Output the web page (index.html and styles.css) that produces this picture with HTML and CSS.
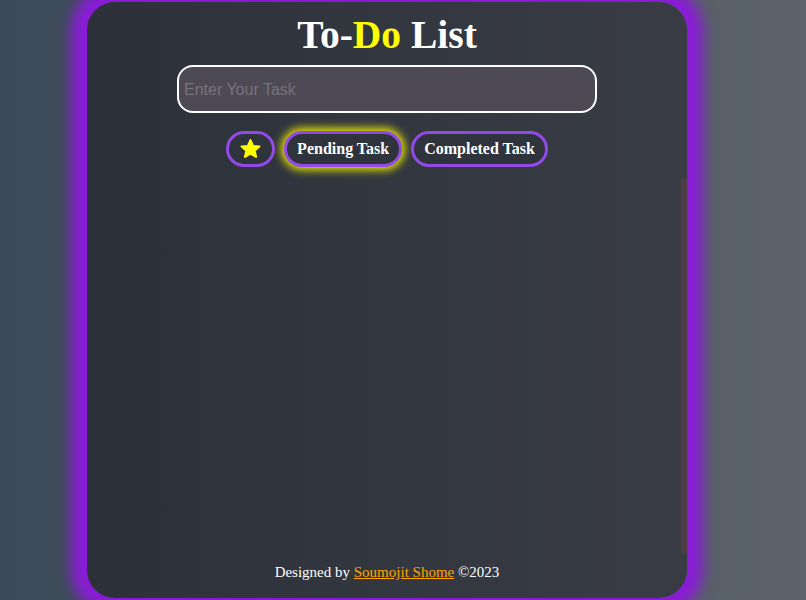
FILE: index.html
```html
<!DOCTYPE html>
<html lang="en">
<head>
<meta charset="UTF-8">
<title>To-Do List</title>
<link rel="stylesheet" href="styles.css">
</head>
<body>
<div class="card">
  <h1 class="title">To-<span class="accent">Do</span> List</h1>
  <input class="task-input" type="text" placeholder="Enter Your Task">
  <div class="filters">
    <button class="filter-btn star-btn" aria-label="Starred">
      <svg width="23" height="22" viewBox="0 0 24 23"><path d="M12 2.2l2.7 6.1 6.6.6-5 4.4 1.5 6.5L12 16.4l-5.8 3.4 1.5-6.5-5-4.4 6.6-.6z" fill="#ffff00" stroke="#ffff00" stroke-width="2.2" stroke-linejoin="round"/></svg>
    </button>
    <button class="filter-btn active">Pending Task</button>
    <button class="filter-btn">Completed Task</button>
  </div>
  <div class="task-list"></div>
  <footer class="footer">Designed by <a href="#" class="author">Soumojit Shome</a> ©2023</footer>
</div>
</body>
</html>
```
FILE: styles.css
```css
* { box-sizing: border-box; }
html, body { height: 100%; }
body {
  margin: 0;
  height: 600px;
  overflow: hidden;
  background: linear-gradient(to right, #3b4a58, #5c636a);
  font-family: "Liberation Serif", "Times New Roman", serif;
}
.card {
  margin: 2px 0 0 87px;
  width: 600px;
  height: 596px;
  border-radius: 28px;
  background: linear-gradient(to right, #2c3139, #393c45);
  box-shadow: 0 0 14px 16px #8a1cd8;
  display: flex;
  flex-direction: column;
  align-items: center;
  padding: 12px 0 17px;
}
.title {
  margin: 0;
  font-size: 39.5px;
  font-weight: bold;
  color: #ffffff;
  line-height: 42px;
}
.accent { color: #ffff00; }
.task-input {
  margin-top: 9px;
  width: 420px;
  height: 48px;
  border: 2px solid #ffffff;
  border-radius: 16px;
  background: #4d4a55;
  padding: 2px 5px 0;
  font-family: "Liberation Sans", Arial, sans-serif;
  font-size: 16px;
  color: #ffffff;
  outline: none;
}
.task-input::placeholder { color: #77737d; }
.filters {
  margin-top: 18px;
  display: flex;
  gap: 9px;
}
.filter-btn {
  height: 36px;
  padding: 0 10px;
  border: 3px solid #9249e6;
  border-radius: 18px;
  background: #2f333c;
  color: #ffffff;
  font-family: "Liberation Serif", "Times New Roman", serif;
  font-weight: bold;
  font-size: 16px;
  display: flex;
  align-items: center;
  justify-content: center;
}
.star-btn { width: 49px; padding: 0; }
.filter-btn.active { box-shadow: 0 0 8px 3px #e8e800; }
.task-list {
  margin-top: 12px;
  align-self: stretch;
  flex: 1;
  border-right: 6px solid #4f3f45;
}
.footer {
  margin-top: 10px;
  color: #ffffff;
  font-size: 15px;
  line-height: 18px;
}
.author { color: #ffa500; }
```
